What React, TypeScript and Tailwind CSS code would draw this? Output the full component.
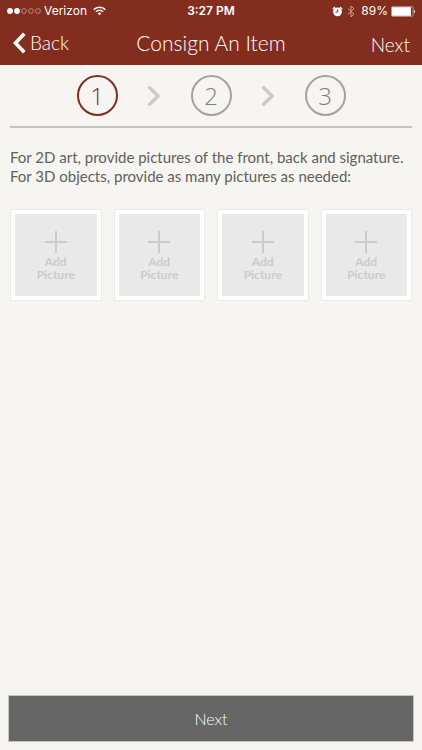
import { Fragment } from "react";

const steps = [1, 2, 3];
const pictureSlots = ["front", "back", "signature", "detail"];

function StatusBar() {
  return (
    <div className="grid grid-cols-3 items-center h-[22px] px-[6px] font-['Inter'] text-[12px] leading-[22px]">
      <div className="flex items-center">
        <svg width="36" height="8" viewBox="0 0 36 8" aria-hidden="true">
          <circle cx="4" cy="4" r="2.9" fill="#fff" />
          <circle cx="11" cy="4" r="2.9" fill="#fff" />
          <circle cx="18" cy="4" r="2.4" fill="none" stroke="#d9a79c" strokeWidth="0.7" />
          <circle cx="25" cy="4" r="2.4" fill="none" stroke="#d9a79c" strokeWidth="0.7" />
          <circle cx="32" cy="4" r="2.4" fill="none" stroke="#d9a79c" strokeWidth="0.7" />
        </svg>
        <span className="ml-[2px]">Verizon</span>
        <svg className="ml-[6px]" width="13" height="10" viewBox="0 0 13 10" fill="none" stroke="#fff" aria-hidden="true">
          <path d="M0.8 3.6a8.1 8.1 0 0 1 11.4 0" strokeWidth="1.6" />
          <path d="M2.9 5.8a5.1 5.1 0 0 1 7.2 0" strokeWidth="1.5" />
          <path d="M6.5 9.3 4.6 7.3a2.8 2.8 0 0 1 3.8 0z" fill="#fff" stroke="none" />
        </svg>
      </div>
      <span className="text-center font-semibold">3:27 PM</span>
      <div className="flex items-center justify-end">
        <svg width="11" height="11" viewBox="0 0 11 11" aria-hidden="true">
          <circle cx="5.5" cy="5.8" r="4.4" fill="#fff" />
          <path d="M0.8 3.2 3 1M10.2 3.2 8 1" stroke="#fff" strokeWidth="1.4" />
          <path d="M5.7 3.4v2.6H3.6" fill="none" stroke="#832d1f" strokeWidth="1" />
        </svg>
        <svg className="ml-1" width="8" height="13" viewBox="0 0 8 13" fill="none" stroke="#cf9f96" strokeWidth="1" aria-hidden="true">
          <path d="M0.8 3.6 7 9.2 4 12V1l3 2.8L0.8 9.4" />
        </svg>
        <span className="ml-[6px]">89%</span>
        <svg className="ml-[3px]" width="25" height="11" viewBox="0 0 25 11" aria-hidden="true">
          <rect x="0.5" y="0.7" width="21.6" height="9.6" rx="1" fill="none" stroke="#e5c2bb" strokeWidth="0.7" />
          <rect x="1" y="1.2" width="19" height="8.6" fill="#fff" />
          <path d="M23 3.8a2 2 0 0 1 0 3.4z" fill="#fff" />
        </svg>
      </div>
    </div>
  );
}

function NavBar() {
  return (
    <nav className="grid grid-cols-[1fr_auto_1fr] items-center h-[43px] px-3 pb-[2px] font-light">
      <button className="flex items-center justify-self-start text-[19px] leading-6">
        <svg className="mr-1" width="14" height="22" viewBox="0 0 14 22" fill="none" stroke="#fff" strokeWidth="3.6" aria-hidden="true">
          <path d="M12.3 1.7 3.5 11l8.8 9.3" />
        </svg>
        Back
      </button>
      <h1 className="text-[21px] leading-6">Consign An Item</h1>
      <button className="justify-self-end pt-1 text-[19px] leading-6">Next</button>
    </nav>
  );
}

function StepIndicator({ current }: { current: number }) {
  return (
    <ol className="flex items-center justify-center h-[63px] border-b-2 border-[#c4c3c0]">
      {steps.map((step) => (
        <Fragment key={step}>
          {step > 1 && (
            <li className="flex justify-center w-[73px]" aria-hidden="true">
              <svg width="14" height="22" viewBox="0 0 14 22" fill="none" stroke="#cbcac8" strokeWidth="3.4">
                <path d="M1.6 1.6 11 11l-9.4 9.4" />
              </svg>
            </li>
          )}
          <li
            className={`flex items-center justify-center w-[41px] h-[41px] rounded-full border-2 font-['Open_Sans'] text-2xl font-light ${
              step === current
                ? "border-[#832d1f] text-[#832d1f]"
                : "border-[#a3a29f] text-[#7f7e7c]"
            }`}
          >
            {step}
          </li>
        </Fragment>
      ))}
    </ol>
  );
}

function PictureTile({ name }: { name: string }) {
  return (
    <button
      aria-label={`Add Picture ${name}`}
      className="h-[92px] p-[4px] bg-white border border-[#ebeae8]"
    >
      <span className="flex flex-col items-center justify-center h-full pt-[2px] bg-[#e9e9e9] text-[#cbcbcb] text-[12px] leading-[13px] font-bold">
        <svg className="mb-[2px]" width="22" height="22" viewBox="0 0 22 22" stroke="#cbcbcb" strokeWidth="2" aria-hidden="true">
          <path d="M11 0v22M0 11h22" />
        </svg>
        <span>
          Add
          <br />
          Picture
        </span>
      </span>
    </button>
  );
}

export default function App() {
  return (
    <div className="flex flex-col min-h-screen bg-[#f6f5f1] font-['Lato',sans-serif]">
      <header className="bg-[#832d1f] text-white">
        <StatusBar />
        <NavBar />
      </header>

      <main className="flex-1 px-[10px]">
        <StepIndicator current={1} />

        <p className="mt-5 text-[15px] leading-[19px] text-[#60605d]">
          For 2D art, provide pictures of the front, back and signature.
          <br />
          For 3D objects, provide as many pictures as needed:
        </p>

        <div className="grid grid-cols-4 gap-3 mt-[23px]">
          {pictureSlots.map((slot) => (
            <PictureTile key={slot} name={slot} />
          ))}
        </div>
      </main>

      <footer className="p-2">
        <button className="w-full h-[47px] bg-[#666] border border-[#c4c4c2] text-[16px] font-light text-white">
          Next
        </button>
      </footer>
    </div>
  );
}
